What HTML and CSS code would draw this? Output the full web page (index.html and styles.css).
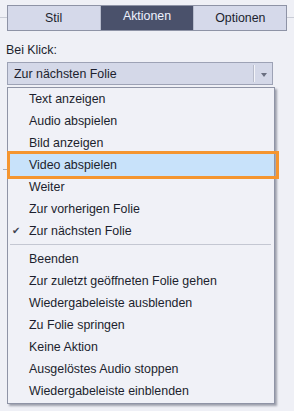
FILE: index.html
```html
<!DOCTYPE html>
<html lang="de">
<head>
<meta charset="utf-8">
<link rel="stylesheet" href="styles.css">
</head>
<body>
<div class="panel">
  <div class="tabbar">
    <div class="tabs">
      <div class="tab">Stil</div>
      <div class="tab active">Aktionen</div>
      <div class="tab">Optionen</div>
    </div>
  </div>
  <div class="label">Bei Klick:</div>
  <div class="select">
    <span class="select-text">Zur nächsten Folie</span>
    <span class="select-sep"></span>
    <span class="select-arrow"></span>
  </div>
  <div class="menu-wrap">
    <span class="tick"></span>
    <ul class="menu">
      <li class="item">Text anzeigen</li>
      <li class="item">Audio abspielen</li>
      <li class="item">Bild anzeigen</li>
      <li class="item hover">Video abspielen</li>
      <li class="item">Weiter</li>
      <li class="item">Zur vorherigen Folie</li>
      <li class="item checked"><span class="check">&#10004;</span>Zur nächsten Folie</li>
      <li class="sep"></li>
      <li class="item">Beenden</li>
      <li class="item">Zur zuletzt geöffneten Folie gehen</li>
      <li class="item">Wiedergabeleiste ausblenden</li>
      <li class="item">Zu Folie springen</li>
      <li class="item">Keine Aktion</li>
      <li class="item">Ausgelöstes Audio stoppen</li>
      <li class="item">Wiedergabeleiste einblenden</li>
    </ul>
  </div>
</div>
</body>
</html>
```
FILE: styles.css
```css
html, body {
  margin: 0;
  padding: 0;
  background: #eff0f6;
}
body {
  width: 294px;
  height: 411px;
  overflow: hidden;
  font-family: "Liberation Sans", Arial, sans-serif;
  font-size: 12.4px;
  color: #1c1f2e;
}
.panel {
  padding: 5px 0 0 0;
}
.tabbar {
  position: relative;
  padding: 0 7px;
}
.tabbar::before {
  content: "";
  position: absolute;
  left: 0;
  right: 0;
  top: 12px;
  height: 1px;
  background: #c9ccd6;
}
.tabs {
  position: relative;
  display: flex;
  height: 26px;
  border: 1px solid #8e93a6;
  background: #d5d9ea;
  box-sizing: border-box;
  width: 280px;
}
.tab {
  flex: 1;
  display: flex;
  align-items: center;
  justify-content: center;
  color: #1c1f2e;
}
.tab.active {
  background: #4a516b;
  color: #eef2ff;
  margin: 0 1px;
  border-left: 1px solid #b6bbcc;
  border-right: 1px solid #b6bbcc;
  align-items: flex-start;
  padding-top: 3px;
}
.label {
  margin: 12px 0 0 6px;
  height: 14px;
  line-height: 14px;
}
.select {
  margin: 5px 0 0 7px;
  width: 266px;
  height: 23px;
  box-sizing: border-box;
  border: 1px solid #9da2b5;
  background: #d4d8e8;
  display: flex;
  align-items: center;
  position: relative;
}
.select-text {
  flex: 1;
  padding-left: 6px;
}
.select-sep {
  width: 1px;
  height: 17px;
  background: #f3f4f9;
  border-left: 1px solid #b8bccb;
  margin-right: 6px;
}
.select-arrow {
  width: 0;
  height: 0;
  border-left: 3px solid transparent;
  border-right: 3px solid transparent;
  border-top: 4px solid #6a6f80;
  margin-right: 5px;
  margin-top: 2px;
}
.menu-wrap {
  position: relative;
  margin: 2px 0 0 7px;
}
.tick {
  position: absolute;
  left: -4px;
  top: 82px;
  width: 4px;
  height: 1px;
  background: #a8acb8;
}
.menu {
  list-style: none;
  margin: 0;
  padding: 0 0 1px 0;
  width: 268px;
  box-sizing: border-box;
  border: 1px solid #8f94a6;
  background: #f0f1f7;
  box-shadow: 2px 2px 2px #9ea1ad;
}
.item {
  position: relative;
  height: 22px;
  line-height: 22px;
  padding-left: 21px;
  white-space: nowrap;
}
.check {
  position: absolute;
  left: 4px;
  top: 0;
  font-size: 10px;
  color: #404452;
}
.item.hover {
  background: #c8e2fa;
}
.item.hover::after {
  content: "";
  position: absolute;
  left: -1px;
  right: -5px;
  top: -3px;
  bottom: -3px;
  border: 3px solid #f5952f;
}
.sep {
  height: 1px;
  margin: 2px 3px 3px 2px;
  background: #c4c7d2;
}
```
